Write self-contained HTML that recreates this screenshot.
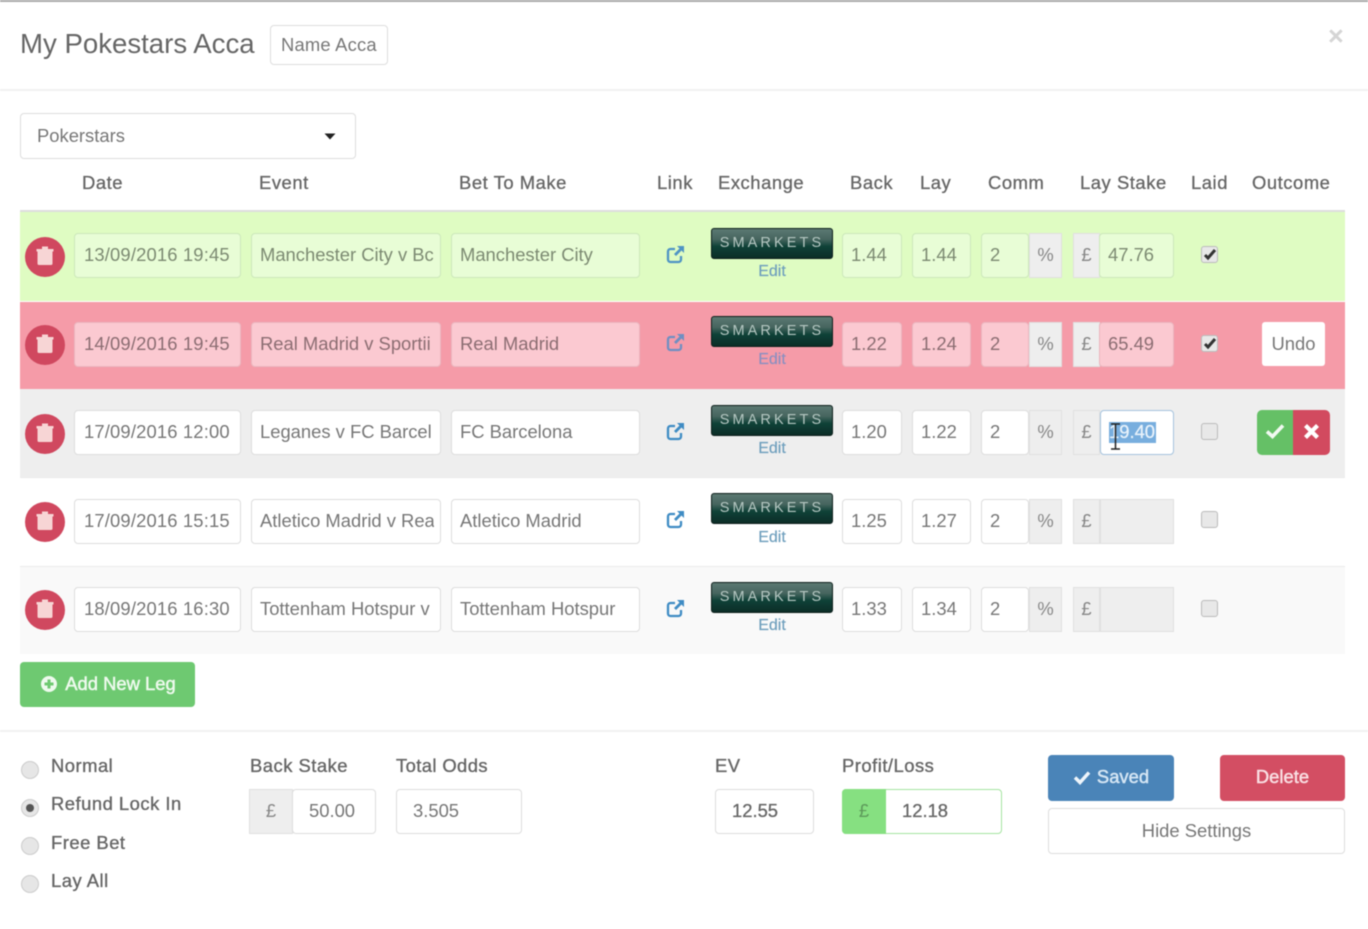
<!DOCTYPE html>
<html><head><meta charset="utf-8"><style>
html,body{margin:0;padding:0;background:#fff}
body{width:1368px;height:929px;position:relative;overflow:hidden;font-family:"Liberation Sans",sans-serif;color:#666;font-size:18.4px}
#w{left:0;top:0;width:1368px;height:929px;filter:blur(.45px);background:#fff;overflow:hidden}
div,span,svg{position:absolute;box-sizing:border-box}
.t{white-space:nowrap;line-height:24px}
.h{top:171px;color:#666;font-weight:400;letter-spacing:.55px;-webkit-text-stroke:.3px #666}
.r{left:20px;width:1325px}
.i{height:45px;border:1.5px solid #ddd;border-radius:4px;background:#fff;padding:0 8px;line-height:42px;white-space:nowrap;overflow:hidden;color:#777}
.c{left:8px;right:6px;top:0;height:100%;overflow:hidden}
.d{letter-spacing:.16px;padding-left:9px}
.g .i{background:#e8fdd6;border-color:#cce8ba;color:#7c8a72}
.p .i{background:#fbc9d1;border-color:#eab6bf;color:#8b6d72}
.a{height:45px;background:#eee;border:1.5px solid #e0e0e0;color:#888;text-align:center;line-height:42px}
.del{left:25px;width:40px;height:40px;border-radius:50%;background:#d0485f}
.lnk{left:666px;width:19px;height:19px}
.sm{left:711px;width:122px;height:31px;border-radius:3px;background:linear-gradient(#5c7872 0,#47665f 35%,#0f4238 60%,#0c2d27 100%);border:1.5px solid #0d1f1b;color:#b5c7c2;font-size:14.5px;letter-spacing:3.1px;text-align:center;line-height:29px;white-space:nowrap}
.ed{left:711px;width:122px;text-align:center;color:#6f9fbd;font-size:16px;line-height:20px;-webkit-text-stroke:.2px #6f9fbd}
.cb{left:1201px;width:17px;height:17px;border:1.5px solid #bbb;border-radius:3px;background:#e8e8e8}
.rad{left:21px;width:18px;height:18px;border-radius:50%;background:#e6e6e6;border:1.5px solid #ccc}
.lb{left:51px;color:#666;letter-spacing:.5px;-webkit-text-stroke:.35px #666}
.btn{border-radius:4px;color:#fff;text-align:center;white-space:nowrap;-webkit-text-stroke:.5px currentColor}
</style></head><body><div id="w">
<div style="left:0;top:0;width:1368px;height:1.5px;background:#aaa"></div>
<div class="t" style="left:20px;top:28px;font-size:27.6px;line-height:32px;color:#666">My Pokestars Acca</div>
<div class="i" style="left:270px;top:25px;width:118px;height:40px;line-height:37px;padding:0 10px;color:#777;letter-spacing:.2px">Name Acca</div>
<div class="t" style="left:1328px;top:21px;font-size:27px;line-height:30px;font-weight:700;color:#d5d5d5">×</div>
<div style="left:0;top:89px;width:1368px;height:2px;background:#f1f1f1"></div>

<div class="i" style="left:20px;top:113px;width:336px;height:46px;padding:0 16px;line-height:43px">Pokerstars</div>
<svg style="left:324px;top:133px" width="12" height="7"><path d="M0.5 0.5H11.5L6 6.5Z" fill="#222"/></svg>

<div class="t h" style="left:82px">Date</div>
<div class="t h" style="left:259px">Event</div>
<div class="t h" style="left:459px">Bet To Make</div>
<div class="t h" style="left:657px">Link</div>
<div class="t h" style="left:718px">Exchange</div>
<div class="t h" style="left:850px">Back</div>
<div class="t h" style="left:920px">Lay</div>
<div class="t h" style="left:988px">Comm</div>
<div class="t h" style="left:1080px">Lay Stake</div>
<div class="t h" style="left:1191px">Laid</div>
<div class="t h" style="left:1252px">Outcome</div>

<div class="r" style="top:210px;height:2px;background:#ddd"></div>
<div class="r" style="top:212px;height:89px;background:#dffcc2"></div>
<div class="r" style="top:302px;height:87px;background:#f59ba8"></div>
<div class="r" style="top:389px;height:88px;background:#eeeeee"></div>
<div class="r" style="top:477px;height:1px;background:#eaeaea"></div>
<div class="r" style="top:566px;height:1px;background:#eaeaea"></div>
<div class="r" style="top:567px;height:87px;background:#f9f9f9"></div>

<!-- Row 1 -->
<div class="g">
<div class="del" style="top:237px"></div>
<svg style="left:35px;top:245px" width="20" height="21" viewBox="0 0 20 21"><path d="M1.500 4H18.500V6.500H17.500V18.500a1.500 1.500 0 0 1-1.500 1.500H4a1.500 1.500 0 0 1-1.500-1.500V6.500H1.500ZM7 4V1.500H13V4" fill="#f7d5d5"/></svg>
<div class="i d" style="left:74px;top:233px;width:167px">13/09/2016 19:45</div>
<div class="i" style="left:251px;top:233px;width:190px"><span class="c">Manchester City v Bc</span></div>
<div class="i" style="left:451px;top:233px;width:189px">Manchester City</div>
<svg class="lnk" style="top:245px" viewBox="0 0 19 19"><path d="M9 4H4.500A2.500 2.500 0 0 0 2 6.500V14.500A2.500 2.500 0 0 0 4.500 17H12.500A2.500 2.500 0 0 0 15 14.500V11" fill="none" stroke="#4f94c4" stroke-width="2.300"/><path d="M11 1H18V8L15.500 5.500L10 11L8 9L13.500 3.500Z" fill="#4f94c4"/></svg>
<div class="sm" style="top:228px">SMARKETS</div>
<div class="ed" style="top:262px">Edit</div>
<div class="i" style="left:842px;top:233px;width:60px">1.44</div>
<div class="i" style="left:912px;top:233px;width:59px">1.44</div>
<div class="i" style="left:981px;top:233px;width:48px">2</div>
<div class="a" style="left:1029px;top:233px;width:33px">%</div>
<div class="a" style="left:1073px;top:233px;width:27px">£</div>
<div class="i" style="left:1099px;top:233px;width:75px">47.76</div>
<div class="cb" style="top:246px"></div>
<svg style="left:1203px;top:248px" width="14" height="13" viewBox="0 0 14 13"><path d="M2 7L5 10L12 2" fill="none" stroke="#333" stroke-width="3"/></svg>
</div>

<!-- Row 2 -->
<div class="p">
<div class="del" style="top:325px"></div>
<svg style="left:35px;top:333px" width="20" height="21" viewBox="0 0 20 21"><path d="M1.500 4H18.500V6.500H17.500V18.500a1.500 1.500 0 0 1-1.500 1.500H4a1.500 1.500 0 0 1-1.500-1.500V6.500H1.500ZM7 4V1.500H13V4" fill="#f7d5d5"/></svg>
<div class="i d" style="left:74px;top:322px;width:167px">14/09/2016 19:45</div>
<div class="i" style="left:251px;top:322px;width:190px"><span class="c">Real Madrid v Sportii</span></div>
<div class="i" style="left:451px;top:322px;width:189px">Real Madrid</div>
<svg class="lnk" style="top:333px" viewBox="0 0 19 19"><path d="M9 4H4.500A2.500 2.500 0 0 0 2 6.500V14.500A2.500 2.500 0 0 0 4.500 17H12.500A2.500 2.500 0 0 0 15 14.500V11" fill="none" stroke="#6f8fc2" stroke-width="2.300"/><path d="M11 1H18V8L15.500 5.500L10 11L8 9L13.500 3.500Z" fill="#6f8fc2"/></svg>
<div class="sm" style="top:316px">SMARKETS</div>
<div class="ed" style="top:350px;color:#8b8fc0;-webkit-text-stroke:.2px #8b8fc0">Edit</div>
<div class="i" style="left:842px;top:322px;width:60px">1.22</div>
<div class="i" style="left:912px;top:322px;width:59px">1.24</div>
<div class="i" style="left:981px;top:322px;width:48px">2</div>
<div class="a" style="left:1029px;top:322px;width:33px">%</div>
<div class="a" style="left:1073px;top:322px;width:27px">£</div>
<div class="i" style="left:1099px;top:322px;width:75px">65.49</div>
<div class="cb" style="top:335px"></div>
<svg style="left:1203px;top:337px" width="14" height="13" viewBox="0 0 14 13"><path d="M2 7L5 10L12 2" fill="none" stroke="#333" stroke-width="3"/></svg>
<div class="t" style="left:1262px;top:322px;width:63px;height:44px;background:#fff;border-radius:3px;text-align:center;line-height:43px;color:#777">Undo</div>
</div>

<!-- Row 3 -->
<div class="del" style="top:414px"></div>
<svg style="left:35px;top:422px" width="20" height="21" viewBox="0 0 20 21"><path d="M1.500 4H18.500V6.500H17.500V18.500a1.500 1.500 0 0 1-1.500 1.500H4a1.500 1.500 0 0 1-1.500-1.500V6.500H1.500ZM7 4V1.500H13V4" fill="#f7d5d5"/></svg>
<div class="i d" style="left:74px;top:410px;width:167px">17/09/2016 12:00</div>
<div class="i" style="left:251px;top:410px;width:190px"><span class="c">Leganes v FC Barcel</span></div>
<div class="i" style="left:451px;top:410px;width:189px">FC Barcelona</div>
<svg class="lnk" style="top:422px" viewBox="0 0 19 19"><path d="M9 4H4.500A2.500 2.500 0 0 0 2 6.500V14.500A2.500 2.500 0 0 0 4.500 17H12.500A2.500 2.500 0 0 0 15 14.500V11" fill="none" stroke="#3f8cc4" stroke-width="2.300"/><path d="M11 1H18V8L15.500 5.500L10 11L8 9L13.500 3.500Z" fill="#3f8cc4"/></svg>
<div class="sm" style="top:405px">SMARKETS</div>
<div class="ed" style="top:439px">Edit</div>
<div class="i" style="left:842px;top:410px;width:60px">1.20</div>
<div class="i" style="left:912px;top:410px;width:59px">1.22</div>
<div class="i" style="left:981px;top:410px;width:48px">2</div>
<div class="a" style="left:1029px;top:410px;width:33px">%</div>
<div class="a" style="left:1073px;top:410px;width:27px">£</div>
<div class="i" style="left:1100px;top:410px;width:74px;border-color:#a5c3de"></div>
<div style="left:1109px;top:422px;width:47px;height:21px;background:#78aede"></div>
<div class="t" style="left:1109px;top:420px;color:#e8f2fb;-webkit-text-stroke:.3px #e8f2fb">19.40</div>
<svg style="left:1109px;top:423px" width="13" height="28" viewBox="0 0 13 28"><path d="M2 1H11M6.500 1V26M2 26H11" fill="none" stroke="#222" stroke-width="1.500"/></svg>
<div class="cb" style="top:423px"></div>
<div style="left:1257px;top:410px;width:37px;height:45px;background:#65c066;border-radius:5px 0 0 5px"></div>
<div style="left:1293px;top:410px;width:37px;height:45px;background:#d24a5f;border-radius:0 5px 5px 0"></div>
<svg style="left:1265px;top:423px" width="20" height="16" viewBox="0 0 20 16"><path d="M2 8.500L7.500 13.500L18 2.500" fill="none" stroke="#f1f9f1" stroke-width="3.600"/></svg>
<svg style="left:1303px;top:423px" width="17" height="17" viewBox="0 0 17 17"><path d="M2.500 2.500L14.500 14.500M14.500 2.500L2.500 14.500" fill="none" stroke="#fff" stroke-width="4.200"/></svg>

<!-- Row 4 -->
<div class="del" style="top:502px"></div>
<svg style="left:35px;top:510px" width="20" height="21" viewBox="0 0 20 21"><path d="M1.500 4H18.500V6.500H17.500V18.500a1.500 1.500 0 0 1-1.500 1.500H4a1.500 1.500 0 0 1-1.500-1.500V6.500H1.500ZM7 4V1.500H13V4" fill="#f7d5d5"/></svg>
<div class="i d" style="left:74px;top:499px;width:167px">17/09/2016 15:15</div>
<div class="i" style="left:251px;top:499px;width:190px"><span class="c">Atletico Madrid v Rea</span></div>
<div class="i" style="left:451px;top:499px;width:189px">Atletico Madrid</div>
<svg class="lnk" style="top:510px" viewBox="0 0 19 19"><path d="M9 4H4.500A2.500 2.500 0 0 0 2 6.500V14.500A2.500 2.500 0 0 0 4.500 17H12.500A2.500 2.500 0 0 0 15 14.500V11" fill="none" stroke="#3f8cc4" stroke-width="2.300"/><path d="M11 1H18V8L15.500 5.500L10 11L8 9L13.500 3.500Z" fill="#3f8cc4"/></svg>
<div class="sm" style="top:493px">SMARKETS</div>
<div class="ed" style="top:528px">Edit</div>
<div class="i" style="left:842px;top:499px;width:60px">1.25</div>
<div class="i" style="left:912px;top:499px;width:59px">1.27</div>
<div class="i" style="left:981px;top:499px;width:48px">2</div>
<div class="a" style="left:1029px;top:499px;width:33px">%</div>
<div class="a" style="left:1073px;top:499px;width:27px">£</div>
<div class="a" style="left:1100px;top:499px;width:74px"></div>
<div class="cb" style="top:511px"></div>

<!-- Row 5 -->
<div class="del" style="top:590px"></div>
<svg style="left:35px;top:598px" width="20" height="21" viewBox="0 0 20 21"><path d="M1.500 4H18.500V6.500H17.500V18.500a1.500 1.500 0 0 1-1.500 1.500H4a1.500 1.500 0 0 1-1.500-1.500V6.500H1.500ZM7 4V1.500H13V4" fill="#f7d5d5"/></svg>
<div class="i d" style="left:74px;top:587px;width:167px">18/09/2016 16:30</div>
<div class="i" style="left:251px;top:587px;width:190px"><span class="c">Tottenham Hotspur v</span></div>
<div class="i" style="left:451px;top:587px;width:189px">Tottenham Hotspur</div>
<svg class="lnk" style="top:599px" viewBox="0 0 19 19"><path d="M9 4H4.500A2.500 2.500 0 0 0 2 6.500V14.500A2.500 2.500 0 0 0 4.500 17H12.500A2.500 2.500 0 0 0 15 14.500V11" fill="none" stroke="#3f8cc4" stroke-width="2.300"/><path d="M11 1H18V8L15.500 5.500L10 11L8 9L13.500 3.500Z" fill="#3f8cc4"/></svg>
<div class="sm" style="top:582px">SMARKETS</div>
<div class="ed" style="top:616px">Edit</div>
<div class="i" style="left:842px;top:587px;width:60px">1.33</div>
<div class="i" style="left:912px;top:587px;width:59px">1.34</div>
<div class="i" style="left:981px;top:587px;width:48px">2</div>
<div class="a" style="left:1029px;top:587px;width:33px">%</div>
<div class="a" style="left:1073px;top:587px;width:27px">£</div>
<div class="a" style="left:1100px;top:587px;width:74px"></div>
<div class="cb" style="top:600px"></div>

<!-- Add leg -->
<div class="btn" style="left:20px;top:662px;width:175px;height:45px;background:#6ec971;line-height:44px;padding-left:26px;color:#eefaee">Add New Leg</div>
<svg style="left:40px;top:675px" width="18" height="18" viewBox="0 0 18 18"><path d="M9 1a8 8 0 1 0 0 16a8 8 0 1 0 0-16ZM7.500 4.500H10.500V7.500H13.500V10.500H10.500V13.500H7.500V10.500H4.500V7.500H7.500Z" fill="#eefaee" fill-rule="evenodd"/></svg>

<div style="left:0;top:730px;width:1368px;height:2px;background:#f1f1f1"></div>

<!-- Options -->
<div class="rad" style="top:761px"></div>
<div class="rad" style="top:799px"></div>
<div style="left:26px;top:804px;width:8px;height:8px;border-radius:50%;background:#555"></div>
<div class="rad" style="top:837px"></div>
<div class="rad" style="top:875px"></div>
<div class="t lb" style="top:754px">Normal</div>
<div class="t lb" style="top:792px">Refund Lock In</div>
<div class="t lb" style="top:831px">Free Bet</div>
<div class="t lb" style="top:869px">Lay All</div>

<div class="t lb" style="left:250px;top:754px">Back Stake</div>
<div class="a" style="left:249px;top:789px;width:44px;background:#eee">£</div>
<div class="i" style="left:292px;top:789px;width:84px;padding-left:16px">50.00</div>
<div class="t lb" style="left:396px;top:754px;letter-spacing:.4px">Total Odds</div>
<div class="i" style="left:396px;top:789px;width:126px;padding-left:16px">3.505</div>

<div class="t lb" style="left:715px;top:754px">EV</div>
<div class="i" style="left:715px;top:789px;width:99px;padding-left:16px;color:#666;-webkit-text-stroke:.3px #666">12.55</div>
<div class="t lb" style="left:842px;top:754px">Profit/Loss</div>
<div class="i" style="left:842px;top:789px;width:160px;padding-left:59px;border-color:#a5e3a0;color:#666;-webkit-text-stroke:.3px #666">12.18</div>
<div style="left:842px;top:789px;width:44px;height:45px;background:#86e081;border-radius:4px 0 0 4px;text-align:center;line-height:43px;color:#5d9a5a">£</div>

<div class="btn" style="left:1048px;top:755px;width:126px;height:46px;background:#4a84b8;line-height:44px;padding-left:24px;color:#d5e6f4">Saved</div>
<svg style="left:1073px;top:770px" width="18" height="15" viewBox="0 0 18 15"><path d="M2 7.500L7 12.500L16 2.500" fill="none" stroke="#eef5fb" stroke-width="3.500"/></svg>
<div class="btn" style="left:1220px;top:755px;width:125px;height:46px;background:#d34e63;line-height:44px;color:#f9dfe3">Delete</div>
<div class="i" style="left:1048px;top:808px;width:297px;height:46px;text-align:center;line-height:43px">Hide Settings</div>
</div></body></html>
